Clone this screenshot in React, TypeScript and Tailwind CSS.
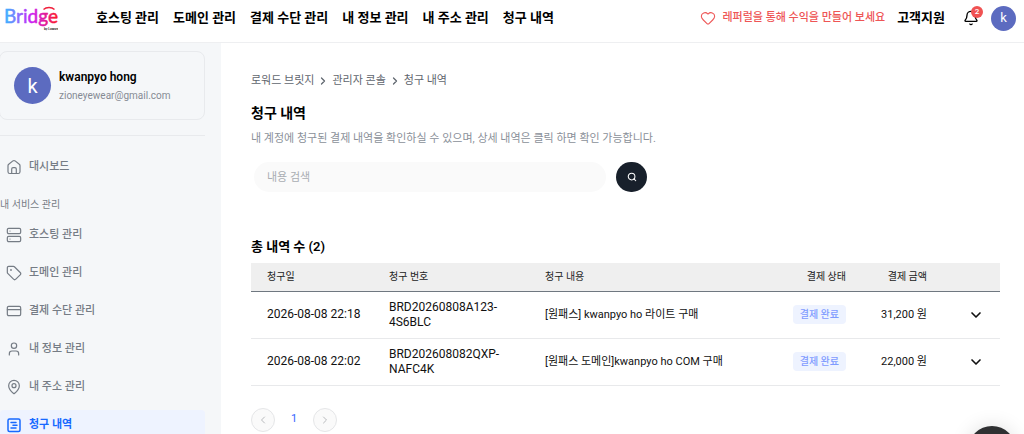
import { ReactNode } from "react";
import {
  Bell,
  ChevronDown,
  ChevronLeft,
  ChevronRight,
  CreditCard,
  Heart,
  MapPin,
  Search,
  Server,
  Tag,
  User,
} from "lucide-react";

const topMenu = ["호스팅 관리", "도메인 관리", "결제 수단 관리", "내 정보 관리", "내 주소 관리", "청구 내역"];

const HomeIcon = () => (
  <svg viewBox="0 0 16 16" className="size-4" fill="none" stroke="currentColor" strokeWidth="1.2" strokeLinecap="round" strokeLinejoin="round">
    <path d="M2 6.7c0-.6.3-1.1.7-1.4l4.2-3.4c.7-.5 1.5-.5 2.2 0l4.2 3.4c.4.3.7.8.7 1.4v6c0 1-.8 1.8-1.8 1.8H3.8C2.8 14.5 2 13.7 2 12.7z" />
    <path d="M5.7 14.4V10c0-.8.6-1.4 1.4-1.4h1.8c.8 0 1.4.6 1.4 1.4v4.4" />
  </svg>
);

const BillIcon = () => (
  <svg viewBox="0 0 16 16" className="size-4" fill="none" stroke="currentColor" strokeWidth="1.5" strokeLinecap="round" strokeLinejoin="round">
    <rect x="2" y="2" width="12" height="12.5" rx="1.5" />
    <path d="M5 5.5h5M7 8.3h4M5 11h5" />
  </svg>
);

const services: { label: string; icon: ReactNode; active?: boolean }[] = [
  { label: "호스팅 관리", icon: <Server className="size-4" strokeWidth={1.8} /> },
  { label: "도메인 관리", icon: <Tag className="size-4" strokeWidth={1.8} /> },
  { label: "결제 수단 관리", icon: <CreditCard className="size-4" strokeWidth={1.8} /> },
  { label: "내 정보 관리", icon: <User className="size-4" strokeWidth={1.8} /> },
  { label: "내 주소 관리", icon: <MapPin className="size-4" strokeWidth={1.8} /> },
  { label: "청구 내역", icon: <BillIcon />, active: true },
];

const bills = [
  { date: "2026-08-08 22:18", no: "BRD20260808A123-4S6BLC", title: "[원패스] kwanpyo ho 라이트 구매", amount: "31,200 원" },
  { date: "2026-08-08 22:02", no: "BRD202608082QXP-NAFC4K", title: "[원패스 도메인]kwanpyo ho COM 구매", amount: "22,000 원" },
];

function Logo() {
  return (
    <svg viewBox="0 0 58 32" className="h-8 w-[58px]" role="img" aria-label="Bridge by Loword">
      <defs>
        <linearGradient id="brand" gradientUnits="userSpaceOnUse" x1="5" y1="0" x2="58" y2="0">
          <stop offset="0" stopColor="#38b6ff" />
          <stop offset="0.25" stopColor="#8a6cff" />
          <stop offset="0.5" stopColor="#cb1ff5" />
          <stop offset="0.75" stopColor="#e01b9c" />
          <stop offset="1" stopColor="#ff1a1a" />
        </linearGradient>
      </defs>
      <text x="4" y="21" fontSize="19" fontFamily="Lato, sans-serif" fill="url(#brand)" stroke="url(#brand)" strokeWidth="0.5">Bridge</text>
      <path d="M43.5 7.5c2.8-2.700 8.200-2.700 11 0" fill="none" stroke="#f0203c" strokeWidth="1.4" />
      <text x="44" y="28" fontSize="3" fontWeight="700" fontFamily="Inter, sans-serif" fill="#222">by Loword</text>
    </svg>
  );
}

function Header() {
  return (
    <header className="flex h-[43px] shrink-0 items-center border-b border-[#eeeff1] bg-white pr-2 pb-1.5">
      <a href="#" className="shrink-0">
        <Logo />
      </a>
      <nav className="ml-[38px] flex gap-3.5 text-[13px] font-semibold whitespace-nowrap">
        {topMenu.map((m) => (
          <a key={m} href="#">{m}</a>
        ))}
      </nav>
      <div className="ml-auto flex items-center whitespace-nowrap">
        <a href="#" className="flex items-center gap-1.5 text-[11px] font-medium text-[#ee5555]">
          <Heart className="size-4" strokeWidth={1.6} />
          레퍼럴을 통해 수익을 만들어 보세요
        </a>
        <a href="#" className="ml-3 text-[13px] font-semibold">고객지원</a>
        <button type="button" aria-label="알림" className="relative ml-[18px]">
          <Bell className="size-4" strokeWidth={2} />
          <span className="absolute -top-1 -right-1 flex size-3 items-center justify-center rounded-full bg-[#f05252] text-[8px] font-medium text-white">2</span>
        </button>
        <button type="button" aria-label="계정" className="ml-3 flex size-[25px] items-center justify-center rounded-full bg-[#5c6bc0] text-[13px] text-white">k</button>
      </div>
    </header>
  );
}

function Sidebar() {
  return (
    <aside className="w-[221px] shrink-0 overflow-hidden bg-[#f5f7f9] pt-2 pr-4">
      <div className="-ml-px flex h-[69px] items-center gap-2 rounded-lg border border-[#e8eaed] pl-3.5">
        <span className="flex size-[37px] items-center justify-center rounded-full bg-[#5c6bc0] text-xl text-white">k</span>
        <div>
          <p className="text-xs leading-5 font-semibold">kwanpyo hong</p>
          <p className="text-[10px] leading-[18px] text-[#858b94]">zioneyewear@gmail.com</p>
        </div>
      </div>
      <hr className="mt-[15px] border-[#e8eaed]" />
      <a href="#" className="mt-4 flex h-[30px] items-center gap-[7px] pl-1.5 text-[11px] font-medium text-[#757c85]">
        <HomeIcon />
        대시보드
      </a>
      <p className="mt-[15px] text-[10px] leading-4 text-[#757c85]">내 서비스 관리</p>
      <nav className="mt-[7px] flex flex-col gap-2">
        {services.map((s) => (
          <a
            key={s.label}
            href="#"
            className={
              s.active
                ? "flex h-[30px] items-center gap-[7px] rounded bg-[#eef3ff] pl-1.5 text-[11px] font-semibold text-[#1769ff]"
                : "flex h-[30px] items-center gap-[7px] pl-1.5 text-[11px] font-medium text-[#757c85]"
            }
          >
            {s.icon}
            {s.label}
          </a>
        ))}
      </nav>
    </aside>
  );
}

function BillTable() {
  return (
    <table className="mt-1.5 w-full table-fixed border-collapse text-left">
      <colgroup>
        <col className="w-[122px]" />
        <col className="w-[156px]" />
        <col />
        <col className="w-[83px]" />
        <col className="w-[81px]" />
        <col className="w-[57px]" />
      </colgroup>
      <thead>
        <tr className="h-7 border-b border-[#6f7780] bg-[#efefef] text-[10px] text-[#222]">
          <th className="pl-4 font-normal">청구일</th>
          <th className="pl-4 font-normal">청구 번호</th>
          <th className="pl-4 font-normal">청구 내용</th>
          <th className="pr-4 text-right font-normal">결제 상태</th>
          <th className="pr-4 text-right font-normal">결제 금액</th>
          <th aria-label="상세" />
        </tr>
      </thead>
      <tbody>
        {bills.map((b) => (
          <tr key={b.no} className="h-[47px] border-b border-[#e8e9eb] text-[11px] leading-[15px] text-[#111]">
            <td className="pl-4 text-xs leading-[15px] whitespace-nowrap">{b.date}</td>
            <td className="px-4 text-xs leading-[15px]">{b.no}</td>
            <td className="pl-4">{b.title}</td>
            <td className="pr-4 text-right">
              <span className="inline-block rounded bg-[#eef3ff] px-[7px] py-0.5 text-[10px] leading-[15px] font-medium whitespace-nowrap text-[#7f9bff]">결제 완료</span>
            </td>
            <td className="pr-4 text-right whitespace-nowrap">{b.amount}</td>
            <td className="pr-4">
              <button type="button" aria-label="상세 보기" className="ml-auto block">
                <ChevronDown className="size-4" strokeWidth={2.5} />
              </button>
            </td>
          </tr>
        ))}
      </tbody>
    </table>
  );
}

export default function App() {
  return (
    <div className="flex h-screen flex-col overflow-hidden bg-white font-[Roboto,'Noto_Sans_CJK_KR',sans-serif] text-black">
      <Header />
      <div className="flex min-h-0 flex-1">
        <Sidebar />
        <main className="min-w-0 flex-1 overflow-hidden pt-[30px] pr-6 pl-[30px]">
          <nav aria-label="현재 위치" className="flex h-4 items-center gap-[3px] text-[11px] text-[#5f666e]">
            <a href="#">로워드 브릿지</a>
            <ChevronRight className="size-3" strokeWidth={2.5} />
            <a href="#">관리자 콘솔</a>
            <ChevronRight className="size-3" strokeWidth={2.5} />
            <a href="#">청구 내역</a>
          </nav>
          <h1 className="mt-3.5 text-sm leading-5 font-semibold">청구 내역</h1>
          <p className="mt-2 text-[11px] leading-4 text-[#8a9099]">
            내 계정에 청구된 결제 내역을 확인하실 수 있으며, 상세 내역은 클릭 하면 확인 가능합니다.
          </p>
          <form className="mt-[15px] flex gap-2.5 pl-[3px]" onSubmit={(e) => e.preventDefault()}>
            <input
              type="text"
              aria-label="내용 검색"
              placeholder="내용 검색"
              className="h-[30px] w-[352px] rounded-full bg-[#fafafa] px-[13px] text-[11px] outline-none placeholder:text-[#a9adb2]"
            />
            <button type="submit" aria-label="검색" className="flex h-[30px] w-[31px] items-center justify-center rounded-full bg-[#18202b] text-white">
              <Search className="size-2.5" strokeWidth={2.5} />
            </button>
          </form>
          <h2 className="mt-[45px] text-[13px] leading-5 font-semibold">총 내역 수 (2)</h2>
          <BillTable />
          <nav aria-label="페이지" className="mt-[22px] flex items-center gap-[15px]">
            <button type="button" aria-label="이전" className="flex size-6 items-center justify-center rounded-full border border-[#e5e6e8] bg-[#fafafa] text-[#b8babd]">
              <ChevronLeft className="size-3" />
            </button>
            <a href="#" aria-current="page" className="px-px text-[11px] text-[#3366ff]">1</a>
            <button type="button" aria-label="다음" className="flex size-6 items-center justify-center rounded-full border border-[#e5e6e8] bg-[#fafafa] text-[#b8babd]">
              <ChevronRight className="size-3" />
            </button>
          </nav>
        </main>
      </div>
      <button type="button" aria-label="채팅 상담" className="fixed right-2 -bottom-10 size-12 rounded-full bg-[#2f3032] shadow-[0_0_20px_rgba(0,0,0,0.12)]" />
    </div>
  );
}
